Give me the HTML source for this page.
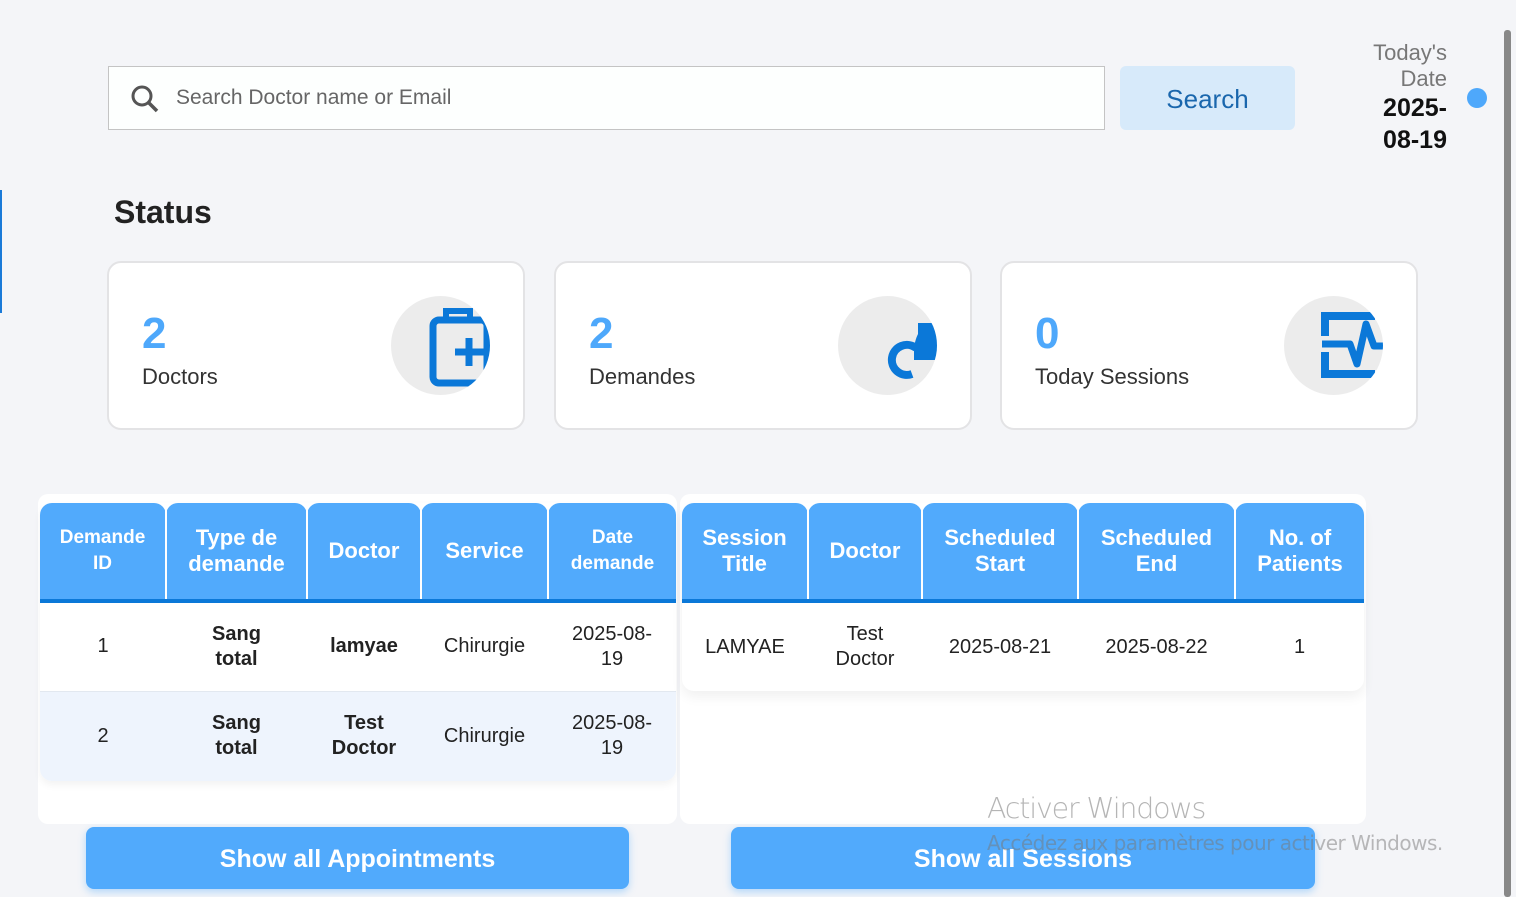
<!DOCTYPE html>
<html><head><meta charset="utf-8"><style>
*{box-sizing:border-box;margin:0;padding:0}
body{width:1516px;height:897px;overflow:hidden;background:#f4f5f8;font-family:"Liberation Sans",sans-serif;position:relative}
.abs{position:absolute}
.search{left:108px;top:66px;width:997px;height:64px;background:#fdfffe;border:1px solid #c4c4c4}
.search span{position:absolute;left:67px;top:19px;font-size:21px;color:#666}
.sbtn{left:1120px;top:66px;width:175px;height:64px;background:#d7eafa;border-radius:6px;color:#1a67ad;font-size:26px;text-align:center;line-height:66px}
.date{right:69px;top:40px;text-align:right;font-size:22px;color:#777;line-height:26px}
.date b{display:block;color:#111;font-size:25px;line-height:32px}
.card{top:261px;width:418px;height:169px;background:#fff;border:2px solid #e3e3e5;border-radius:14px;overflow:hidden}
.card .n{position:absolute;left:33px;top:46px;font-size:44px;font-weight:bold;color:#4ea8fb}
.card .l{position:absolute;left:33px;top:101px;font-size:22px;color:#333}
.circ{position:absolute;left:282px;top:33px;width:99px;height:99px;border-radius:50%;background:#ececec;overflow:hidden}
.wrap{top:494px;height:330px;background:#fff;border-radius:10px}
table{position:absolute;top:9px;border-collapse:collapse;font-size:20px;color:#222;text-align:center}
th{background:#51aafc;color:#fff;font-size:22px;height:98px;border-bottom:4px solid #0b78d8;border-left:2px solid #fff;border-radius:12px 12px 0 0;line-height:26px}
th:first-child{border-left:none}
td{height:90px;line-height:25px}
.btn{top:827px;height:62px;background:#51aafc;border-radius:8px;color:#fff;font-weight:bold;font-size:25px;text-align:center;line-height:64px;box-shadow:0 3px 8px rgba(81,170,252,.4)}
</style></head><body>
<div class="abs" style="left:0;top:190px;width:2px;height:123px;background:#1a7ad8"></div>
<div class="abs" style="left:1504px;top:30px;width:7px;height:867px;background:#888;border-radius:3px"></div>
<div class="abs search"><svg style="position:absolute;left:20px;top:16px" width="32" height="32" viewBox="0 0 32 32"><circle cx="13" cy="13" r="9" fill="none" stroke="#555" stroke-width="3"/><line x1="19.5" y1="19.5" x2="28" y2="28" stroke="#555" stroke-width="3.5"/></svg><span>Search Doctor name or Email</span></div>
<div class="abs sbtn">Search</div>
<div class="abs date">Today's<br>Date<b>2025-<br>08-19</b></div>
<div class="abs" style="left:1467px;top:88px;width:20px;height:20px;border-radius:50%;background:#4ea8fb"></div>
<div class="abs" style="left:114px;top:194px;font-size:32px;font-weight:bold;color:#222">Status</div>

<div class="abs card" style="left:107px"><div class="n">2</div><div class="l">Doctors</div><div class="circ"><svg width="99" height="99" viewBox="0 0 99 99"><rect x="42" y="24" width="54" height="63" rx="6" fill="none" stroke="#0b78d8" stroke-width="7"/><path d="M55 24v-9h24v9" fill="none" stroke="#0b78d8" stroke-width="6"/><path d="M78 42v28M64 56h30" stroke="#0b78d8" stroke-width="7"/></svg></div></div>
<div class="abs card" style="left:554px"><div class="n">2</div><div class="l">Demandes</div><div class="circ"><svg width="99" height="99" viewBox="0 0 99 99"><path d="M78 52a15 15 0 1 0 -4 26" fill="none" stroke="#0b78d8" stroke-width="8"/><path d="M80 27h20v37H76v-8c0-8 2-14 4-18z" fill="#0b78d8"/></svg></div></div>
<div class="abs card" style="left:1000px"><div class="n">0</div><div class="l">Today Sessions</div><div class="circ"><svg width="99" height="99" viewBox="0 0 99 99"><path d="M41 40V20h50M41 56v22h50" fill="none" stroke="#0b78d8" stroke-width="8"/><path d="M38 48h28l7 20 9-40 8 22h10" fill="none" stroke="#0b78d8" stroke-width="7" stroke-linejoin="round"/></svg></div></div>

<div class="abs wrap" style="left:38px;width:639px"><table style="left:2px;width:636px;border-radius:12px;box-shadow:0 4px 8px rgba(0,0,0,.05)"><tr><th style="width:126px;font-size:19px">Demande<br>ID</th><th style="width:141px">Type de<br>demande</th><th style="width:114px">Doctor</th><th style="width:127px">Service</th><th style="width:128px;font-size:19px">Date<br>demande</th></tr>
<tr><td>1</td><td><b>Sang<br>total</b></td><td><b>lamyae</b></td><td>Chirurgie</td><td>2025-08-<br>19</td></tr>
<tr style="background:#eef4fd;border-top:1px solid #e2e8f0"><td style="border-radius:0 0 0 12px">2</td><td><b>Sang<br>total</b></td><td><b>Test<br>Doctor</b></td><td>Chirurgie</td><td style="border-radius:0 0 12px 0">2025-08-<br>19</td></tr></table></div>
<div class="abs wrap" style="left:680px;width:686px"><table style="left:2px;width:682px;background:#fff;border-radius:12px;box-shadow:0 6px 12px rgba(0,0,0,.06)"><tr><th style="width:126px">Session<br>Title</th><th style="width:114px">Doctor</th><th style="width:156px">Scheduled<br>Start</th><th style="width:157px">Scheduled<br>End</th><th style="width:129px">No. of<br>Patients</th></tr>
<tr><td>LAMYAE</td><td>Test<br>Doctor</td><td>2025-08-21</td><td>2025-08-22</td><td>1</td></tr></table></div>

<div class="abs btn" style="left:86px;width:543px">Show all Appointments</div>
<div class="abs btn" style="left:731px;width:584px">Show all Sessions</div>
<div class="abs" style="left:987px;top:792px;font-size:28.5px;color:rgba(120,120,120,.55);font-family:'DejaVu Sans',sans-serif;font-weight:300;letter-spacing:-1.2px">Activer Windows</div>
<div class="abs" style="left:987px;top:831px;font-size:20px;color:rgba(120,120,120,.5);font-family:'DejaVu Sans',sans-serif;letter-spacing:-0.5px">Accédez aux paramètres pour activer Windows.</div>
</body></html>
